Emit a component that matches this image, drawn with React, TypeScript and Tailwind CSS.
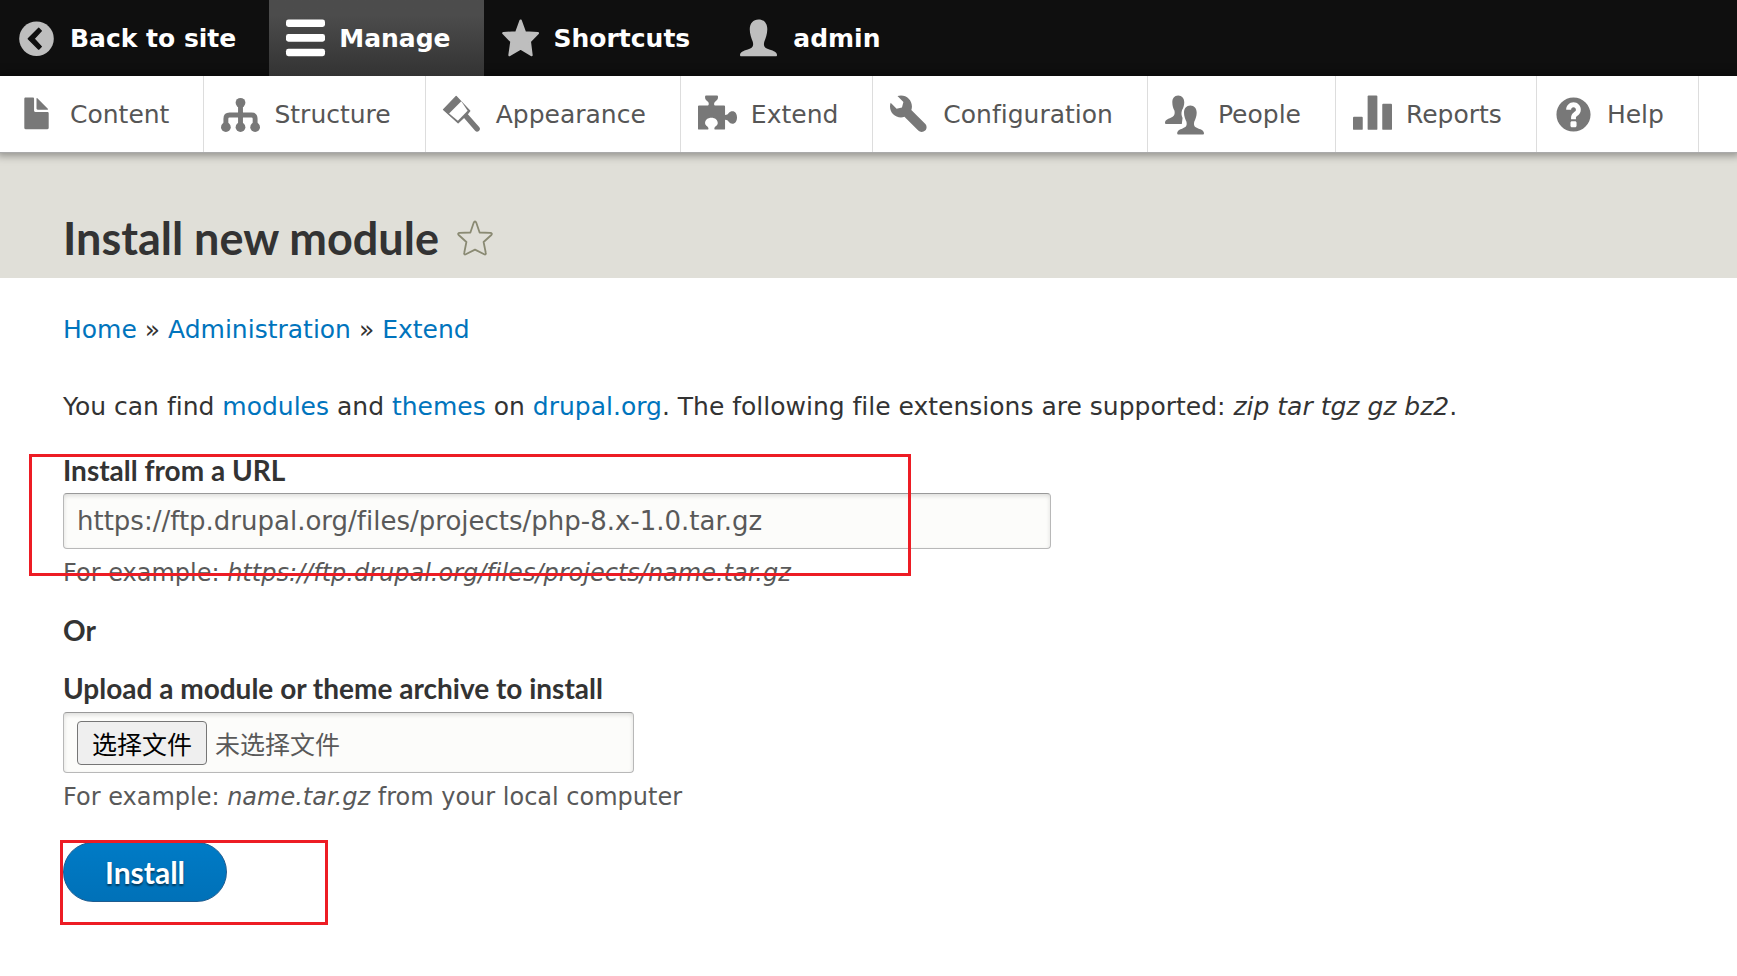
import { useState } from "react";
import type { ReactNode } from "react";

const ICONS: Record<string, ReactNode> = {
  back: (
    <>
      <circle cx="8" cy="8.1" r="7.1" />
      <path
        d="M4.6 8.1 8.9 3.8 10 4.9 7 8.1 10 11.3 8.9 12.4z"
        fill="#0f0f0f"
        stroke="#0f0f0f"
        strokeWidth=".5"
        strokeLinejoin="round"
      />
    </>
  ),
  menu: (
    <>
      <rect x="0" y=".2" width="16" height="3.1" rx="1" />
      <rect x="0" y="6.2" width="16" height="3.1" rx="1" />
      <rect x="0" y="12.2" width="16" height="3.1" rx="1" />
    </>
  ),
  star: (
    <path
      d="M8.05.7 9.8 5.5 15.1 5.8 11.8 9.2 12.5 14.8 8.05 12.1 3.5 14.8 4.3 9.2 1 5.8 6.3 5.5z"
      stroke="currentColor"
      strokeWidth="1"
      strokeLinejoin="round"
    />
  ),
  person: (
    <path d="M7.6.2c2.2 0 3.6 1.6 3.6 4 0 2.1-.7 3.7-1.2 5-.5 1.7-.1 2.7 2 3.3 2 .6 3.2 1.2 3.2 2.3 0 .3-.2.5-.5.5H.5c-.3 0-.5-.2-.5-.5 0-1.1 1.2-1.7 3.2-2.3 2.1-.6 2.5-1.6 2-3.3-.5-1.3-1.2-2.9-1.2-5 0-2.4 1.4-4 3.6-4z" />
  ),
  content: (
    <path d="M12.502 7h-5c-.276 0-.502-.225-.502-.5v-5c0-.275-.225-.5-.5-.5h-3c-.275 0-.5.225-.5.5v12.029c0 .275.225.5.5.5h9.002c.275 0 .5-.225.5-.5v-6.029c0-.275-.225-.5-.5-.5zM8.502 6h4c.275 0 .34-.159.146-.354l-4.293-4.292c-.195-.195-.353-.129-.353.146v4c0 .275.225.5.5.5z" />
  ),
  structure: (
    <>
      <circle cx="8" cy="3.2" r="2" />
      <circle cx="2" cy="13.2" r="2" />
      <circle cx="8" cy="13.2" r="2" />
      <circle cx="14" cy="13.2" r="2" />
      <path
        d="M8 3v10M2 13V9.7Q2 8.2 3.5 8.2H12.5Q14 8.2 14 9.7V13"
        fill="none"
        stroke="currentColor"
        strokeWidth="2"
      />
    </>
  ),
  appearance: (
    <>
      <path d="M9.3 8.5 14 13.9" stroke="currentColor" strokeWidth="2.2" strokeLinecap="round" />
      <path
        d="M5.4.6 11 6.5 9.8 8 6.2 11.4.2 6z"
        stroke="currentColor"
        strokeWidth=".5"
        strokeLinejoin="round"
      />
      <path d="M7.5 2.6 10.1 6.5 6.1 10.6 2.5 7.6z" fill="#fff" />
    </>
  ),
  extend: (
    <path d="M.4 4.3H4.1C4.5 4.2 4.5 3.3 4.2 2.9 3.5 2.3 2.9 1.9 2.9 1V.6Q2.9.2 3.3.2H7.8Q8.2.2 8.2.6V1C8.2 1.9 7.5 2.3 6.9 2.9 6.5 3.3 6.5 4.2 6.9 4.3H10.7Q11.1 4.3 11.1 4.7V8.2C11.9 8.2 12.3 7.9 12.6 7.4 13 6.9 13.5 6.7 14.1 6.7 15.3 6.7 16 7.8 16 9.2S15.3 11.8 14.1 11.8C13.5 11.8 13 11.5 12.6 11 12.3 10.6 11.9 10.2 11.1 10.2V13.8Q11.1 14.2 10.7 14.2H7.2Q6.7 14.2 6.7 13.7C6.7 13 8.1 12.6 8.1 11.5 8.1 10.2 7 9.3 5.5 9.3S2.9 10.2 2.9 11.5C2.9 12.6 4.3 13 4.3 13.7Q4.3 14.2 3.8 14.2H.4Q0 14.2 0 13.8V4.7Q0 4.3.4 4.3z" />
  ),
  configuration: (
    <path d="M14.416 11.786l-.01-.008-5.656-5.657c.15-.449.252-.921.252-1.421 0-2.485-2.016-4.5-4.502-4.5-.505 0-.981.102-1.434.255l2.431 2.431-.588 2.196-2.196.588-2.445-2.445c-.162.464-.268.956-.268 1.475 0 2.486 2.014 4.5 4.5 4.5.5 0 .972-.102 1.421-.251l5.665 5.665c.781.781 2.047.781 2.828 0 .39-.391.586-.902.586-1.413 0-.512-.195-1.024-.584-1.415z" />
  ),
  people: (
    <>
      <path d="M5.4.2C7 .2 7.9 1.4 7.9 3 7.9 4.4 7.5 5.3 7 6.2 6.6 7.5 6.7 8.5 7.2 9.4L6.9 11.9H.4Q0 11.9 0 11.5C0 10.3.9 9.9 2 9.5 3.6 9 4.2 8.2 3.9 6.5 3.4 5.5 3 4.4 3 3 3 1.4 3.8.2 5.4.2z" />
      <path
        d="M10.4 4.3c1.6 0 2.6 1.2 2.6 3 0 1.5-.5 2.6-1 3.7-.3 1.5 0 2.2 1.6 2.7 1.4.4 2.4.9 2.4 2.1q0 .4-.4.4H5.4q-.4 0-.4-.4c0-1.2 1-1.7 2.2-2.1 1.6-.5 1.9-1.2 1.6-2.7-.5-1.1-1-2.2-1-3.7 0-1.8 1-3 2.6-3z"
        stroke="#fff"
        strokeWidth="1"
        paintOrder="stroke"
      />
    </>
  ),
  reports: (
    <>
      <rect x="0" y="8.9" width="4" height="5.4" rx=".4" />
      <rect x="6" y=".2" width="4" height="14.1" rx=".4" />
      <rect x="12" y="3.6" width="4" height="10.7" rx=".4" />
    </>
  ),
  help: (
    <path d="M8.002 1c-3.867 0-7 3.134-7 7s3.133 7 7 7c3.865 0 7-3.134 7-7s-3.135-7-7-7zm3 5c0 .551-.16 1.085-.477 1.586l-.158.22c-.07.093-.189.241-.361.393-.168.148-.35.299-.545.447l-.203.189-.141.129-.096.17-.021.235v.63h-2.001v-.704c.026-.396.078-.73.204-.999.125-.269.271-.498.439-.688l.225-.21-.01-.015.176-.14.137-.128c.186-.139.357-.277.516-.417l.148-.18c.098-.152.168-.323.168-.518 0-.552-.447-1-1-1s-1.002.448-1.002 1h-2c0-1.657 1.343-3 3.002-3 1.656 0 3 1.343 3 3zm-1.75 6.619c0 .344-.281.625-.625.625h-1.25c-.345 0-.626-.281-.626-.625v-1.238c0-.344.281-.625.626-.625h1.25c.344 0 .625.281.625.625v1.238z" />
  ),
};

const TABS = [
  { icon: "back", label: "Back to site" },
  { icon: "menu", label: "Manage", active: true },
  { icon: "star", label: "Shortcuts" },
  { icon: "person", label: "admin" },
];

const TRAY = ["Content", "Structure", "Appearance", "Extend", "Configuration", "People", "Reports", "Help"];

function Icon({ name }: { name: string }) {
  return (
    <svg viewBox="0 0 16 16" className="size-[39px] shrink-0 overflow-visible" fill="currentColor" aria-hidden="true">
      {ICONS[name]}
    </svg>
  );
}

function Toolbar() {
  return (
    <header className="relative z-10 text-[25px] leading-[33px]">
      <nav className="flex bg-[#0f0f0f] font-bold text-white">
        {TABS.map((tab) => (
          <a
            key={tab.label}
            href="#"
            className={
              tab.active
                ? "flex h-[76px] items-center gap-[14px] bg-linear-to-b from-[#4c4c4c] from-20% to-[#333] pr-[33px] pl-[17px]"
                : "flex h-[76px] items-center gap-[14px] pr-[33px] pl-[17px]"
            }
          >
            <span className={tab.active ? "text-white" : "text-[#bebebe]"}>
              <Icon name={tab.icon} />
            </span>
            {tab.label}
          </a>
        ))}
      </nav>
      <nav className="flex border-b border-[#aaa] bg-white text-[#565656] shadow-[0_0_8px_3px_rgba(0,0,0,0.35)]">
        {TRAY.map((label) => (
          <a
            key={label}
            href="#"
            className="flex h-[76px] items-center gap-[14px] border-r border-[#ddd] pr-[34px] pl-[17px]"
          >
            <span className="text-[#787878]">
              <Icon name={label.toLowerCase()} />
            </span>
            {label}
          </a>
        ))}
      </nav>
    </header>
  );
}

function Link({ children }: { children: ReactNode }) {
  return (
    <a href="#" className="text-[#0074bd]">
      {children}
    </a>
  );
}

export default function App() {
  const [url, setUrl] = useState("https://ftp.drupal.org/files/projects/php-8.x-1.0.tar.gz");

  return (
    <div className="min-h-screen bg-white font-['DejaVu_Sans','Noto_Sans_CJK_SC',sans-serif] text-[25px] leading-10 text-[#333] [font-variant-ligatures:none]">
      <Toolbar />

      <div className="flex items-center gap-[18px] bg-[#e0dfd8] px-[63px] pt-[57px] pb-3">
        <h1 className="font-['Lato',sans-serif] text-[45px] leading-14 font-bold">Install new module</h1>
        <button type="button" aria-label="Add to shortcuts" className="text-[#8a8a73]">
          <svg viewBox="0 0 36 36" className="size-9" fill="none" stroke="currentColor" strokeWidth="1.8" strokeLinejoin="round">
            <path d="M18 1.5c.6 0 1 .5 1.3 1.3l3.3 9.7 10.7.4c1.6.1 2 1.1 1 2.1l-7.7 7 2.2 11c.3 1.3-.5 1.9-1.6 1.3L18 29.6l-9.2 4.7c-1.1.6-1.9 0-1.6-1.3l2.2-11-7.7-7c-1-1-.6-2 1-2.1l10.7-.4 3.3-9.7c.3-.8.7-1.3 1.3-1.3z" />
          </svg>
        </button>
      </div>

      <main className="px-[63px] pt-8 pb-12">
        <nav aria-label="Breadcrumb">
          <Link>Home</Link> » <Link>Administration</Link> » <Link>Extend</Link>
        </nav>

        <p className="mt-[37px]">
          You can find <Link>modules</Link> and <Link>themes</Link> on <Link>drupal.org</Link>. The following file
          extensions are supported: <em>zip tar tgz gz bz2</em>.
        </p>

        <form onSubmit={(e) => e.preventDefault()}>
          <div className="relative mt-[27px]">
            <label htmlFor="url" className="block font-['Lato',sans-serif] text-[28px] leading-8 font-bold">
              Install from a URL
            </label>
            <input
              id="url"
              type="text"
              value={url}
              onChange={(e) => setUrl(e.target.value)}
              className="mt-[7px] block h-14 w-full max-w-[988px] rounded-[4px] border border-[#b8b8b8] border-t-[#999] bg-[#fcfcfa] px-[13px] text-[26px] text-[#595959] shadow-[inset_0_2px_4px_rgba(0,0,0,0.125)]"
            />
            <p className="mt-2 text-[24px] leading-8 text-[#595959]">
              For example: <em>https://ftp.drupal.org/files/projects/name.tar.gz</em>
            </p>
            <div className="pointer-events-none absolute top-0 -left-[34px] h-[122px] w-[882px] border-3 border-[#ed1c24]" />
          </div>

          <p className="mt-[25px] font-['Lato',sans-serif] text-[28px] leading-8 font-bold">Or</p>

          <div className="mt-[26px]">
            <label htmlFor="archive" className="block font-['Lato',sans-serif] text-[28px] leading-8 font-bold">
              Upload a module or theme archive to install
            </label>
            <div className="mt-2 flex h-[61px] w-full max-w-[571px] items-center gap-2 rounded-[4px] border border-[#b8b8b8] border-t-[#999] bg-[#fcfcfa] px-[13px] text-[#595959] shadow-[inset_0_2px_4px_rgba(0,0,0,0.125)]">
              <input id="archive" type="file" className="sr-only" />
              <label
                htmlFor="archive"
                className="flex h-11 items-center rounded-[4px] border border-[#767676] bg-[#efefef] px-[14px] font-['Noto_Sans_CJK_SC',sans-serif] text-black"
              >
                选择文件
              </label>
              <span className="font-['Noto_Sans_CJK_SC',sans-serif]">未选择文件</span>
            </div>
            <p className="mt-2 text-[24px] leading-8 text-[#595959]">
              For example: <em>name.tar.gz</em> from your local computer
            </p>
          </div>

          <div className="relative mt-[29px]">
            <button
              type="submit"
              className="block h-[60px] rounded-full border border-[#1e5c90] bg-linear-to-b from-[#007bc6] to-[#0071b8] px-[41px] font-['Lato',sans-serif] text-[30px] font-bold text-white text-shadow-[0_2px_2px_rgba(0,0,0,0.5)]"
            >
              Install
            </button>
            <div className="pointer-events-none absolute -top-0.5 -left-[3px] h-[85px] w-[268px] border-3 border-[#ed1c24]" />
          </div>
        </form>
      </main>
    </div>
  );
}
